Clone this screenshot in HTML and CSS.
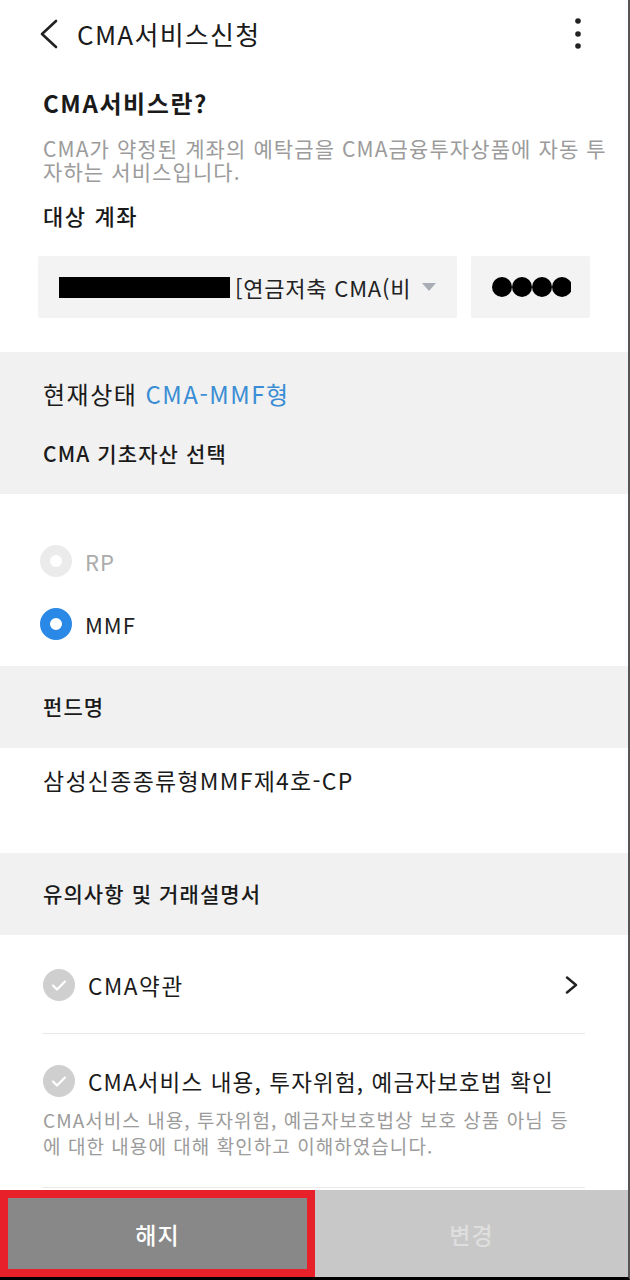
FILE: index.html
```html
<!DOCTYPE html>
<html lang="ko">
<head>
<meta charset="utf-8">
<title>CMA서비스신청</title>
<link rel="stylesheet" href="styles.css">
</head>
<body>
<div class="screen">
  <header class="topbar">
    <svg class="back" width="22" height="30" viewBox="0 0 22 30"><path d="M18 2 L4 15 L18 28" fill="none" stroke="#222" stroke-width="2.6" stroke-linecap="round" stroke-linejoin="round"/></svg>
    <h1 class="title">CMA서비스신청</h1>
    <svg class="kebab" width="10" height="34" viewBox="0 0 10 34"><circle cx="5" cy="4" r="2.8" fill="#222"/><circle cx="5" cy="17" r="2.8" fill="#222"/><circle cx="5" cy="29" r="2.8" fill="#222"/></svg>
  </header>

  <section class="intro">
    <h2 class="intro-title">CMA서비스란?</h2>
    <p class="intro-desc">CMA가 약정된 계좌의 예탁금을 CMA금융투자상품에 자동 투<br>자하는 서비스입니다.</p>
    <h3 class="label">대상 계좌</h3>
    <div class="select-row">
      <div class="select">
        <span class="mask"></span>
        <span class="select-text">[연금저축 CMA(비</span>
        <span class="caret"></span>
      </div>
      <div class="pw">
        <div class="dots"><i></i><i></i><i></i><i></i><i></i></div>
      </div>
    </div>
  </section>

  <section class="band status">
    <p class="status-line">현재상태 <span class="blue">CMA-MMF형</span></p>
    <p class="band-label">CMA 기초자산 선택</p>
  </section>

  <section class="radios">
    <div class="radio-row disabled"><span class="radio"></span><span class="radio-label">RP</span></div>
    <div class="radio-row"><span class="radio on"></span><span class="radio-label">MMF</span></div>
  </section>

  <section class="band short"><p class="band-label">펀드명</p></section>

  <section class="fund"><p class="fund-name">삼성신종종류형MMF제4호-CP</p></section>

  <section class="band short"><p class="band-label">유의사항 및 거래설명서</p></section>

  <section class="terms">
    <div class="term-row">
      <svg class="check" width="32" height="32" viewBox="0 0 32 32"><circle cx="16" cy="16" r="16" fill="#cfcfcf"/><path d="M10 16.5 L14 20.5 L22 12.5" fill="none" stroke="#fff" stroke-width="2.2" stroke-linecap="round" stroke-linejoin="round"/></svg>
      <span class="term-text">CMA약관</span>
      <svg class="chev" width="14" height="18" viewBox="0 0 14 18"><path d="M2 1.5 L11 9 L2 16.5" fill="none" stroke="#222" stroke-width="2.4" stroke-linecap="round" stroke-linejoin="round"/></svg>
    </div>
    <div class="divider"></div>
    <div class="term-row second">
      <svg class="check" width="32" height="32" viewBox="0 0 32 32"><circle cx="16" cy="16" r="16" fill="#cfcfcf"/><path d="M10 16.5 L14 20.5 L22 12.5" fill="none" stroke="#fff" stroke-width="2.2" stroke-linecap="round" stroke-linejoin="round"/></svg>
      <span class="term-text big">CMA서비스 내용, 투자위험, 예금자보호법 확인</span>
    </div>
    <p class="term-desc">CMA서비스 내용, 투자위험, 예금자보호법상 보호 상품 아님 등<br>에 대한 내용에 대해 확인하고 이해하였습니다.</p>
    <div class="divider last"></div>
  </section>

  <footer class="buttons">
    <button class="btn cancel">해지</button>
    <button class="btn change">변경</button>
  </footer>
</div>
</body>
</html>
```
FILE: styles.css
```css
* { box-sizing: border-box; margin: 0; padding: 0; }
html, body { width: 630px; height: 1280px; overflow: hidden; background: #fff; }
body {
  font-family: "Noto Sans CJK KR", "Noto Sans", sans-serif;
  color: #1a1a1a;
}
.screen {
  width: 630px;
  height: 1280px;
  border-right: 2px solid #555;
  border-bottom: 3px solid #000;
  display: flex;
  flex-direction: column;
  overflow: hidden;
}
.topbar {
  height: 70px;
  display: flex;
  align-items: center;
  padding-left: 38px;
  padding-right: 45px;
}
.back { flex: none; margin-top: -2px; }
.title {
  font-size: 26px;
  font-weight: 400;
  line-height: 34px;
  margin-left: 17px;
  margin-top: -2px;
  flex: 1;
  color: #1a1a1a;
  letter-spacing: 1.3px;
}
.kebab { flex: none; margin-top: -2px; }

.intro { padding: 18px 0 34px 43px; }
.intro-title {
  font-size: 24px;
  font-weight: 700;
  line-height: 30px;
  letter-spacing: 1.6px;
}
.intro-desc {
  margin-top: 19px;
  font-size: 21px;
  line-height: 23px;
  color: #9b9b9b;
  white-space: nowrap;
  letter-spacing: 1.1px;
}
.label {
  margin-top: 18px;
  font-size: 22px;
  font-weight: 500;
  line-height: 28px;
  letter-spacing: 1.6px;
}
.select-row {
  margin-top: 27px;
  margin-left: -5px;
  display: flex;
  gap: 14px;
  height: 62px;
}
.select {
  width: 419px;
  background: #f3f3f4;
  border-radius: 2px;
  display: flex;
  align-items: center;
  padding-left: 21px;
}
.mask { width: 171px; height: 21px; background: #000; flex: none; }
.select-text {
  margin-left: 5px;
  font-size: 22px;
  line-height: 28px;
  color: #222;
  letter-spacing: 0.8px;
  white-space: nowrap;
}
.caret {
  margin-left: 11px;
  width: 0; height: 0;
  border-left: 7px solid transparent;
  border-right: 7px solid transparent;
  border-top: 8px solid #a9adb5;
}
.pw {
  width: 119px;
  background: #f3f3f4;
  border-radius: 2px;
  display: flex;
  align-items: center;
  padding-left: 21px;
}
.dots { width: 79px; overflow: hidden; display: flex; }
.dots i { flex: none; width: 20px; height: 20px; border-radius: 50%; background: #000; display: block; }

.band { background: #f1f1f1; padding-left: 43px; }
.status { padding-top: 27px; padding-bottom: 27px; }
.status-line { font-size: 24px; line-height: 30px; letter-spacing: 1.5px; }
.blue { color: #3a8dd4; }
.band-label { font-size: 21px; font-weight: 500; line-height: 28px; letter-spacing: 1.1px; }
.status .band-label { margin-top: 30px; }
.short { padding-top: 26px; padding-bottom: 28px; }

.radios { padding: 47px 0 22px 40px; display: flex; flex-direction: column; gap: 23px; }
.radio-row { display: flex; align-items: center; height: 40px; }
.radio {
  width: 32px; height: 32px; border-radius: 50%;
  border: 10px solid #2a88e6; background: #fff;
}
.disabled .radio { border-color: #ebebeb; }
.radio-label { margin-left: 13px; font-size: 22px; line-height: 28px; color: #222; letter-spacing: 1px; }
.disabled .radio-label { color: #ababab; }

.fund { padding: 17px 0 58px 43px; }
.fund-name { font-size: 23px; line-height: 30px; letter-spacing: 1.25px; }

.terms { padding: 30px 43px 0 42px; flex: 1; }
.term-row { display: flex; align-items: center; height: 40px; }
.term-row .check { margin-left: 1px; flex: none; }
.term-text { margin-left: 13px; font-size: 22.5px; line-height: 28px; flex: 1; letter-spacing: 1.6px; }
.term-text.big { letter-spacing: 1.15px; white-space: nowrap; }
.chev { flex: none; margin-right: 6px; }
.divider { height: 1px; background: #e8e8e8; margin-top: 28px; }
.term-row.second { margin-top: 27px; }
.term-desc {
  margin-top: 6px;
  margin-left: 1px;
  font-size: 19px;
  line-height: 26px;
  color: #9b9b9b;
  letter-spacing: 1.05px;
  white-space: nowrap;
}
.divider.last { margin-top: 28px; }

.buttons { display: flex; height: 87px; flex: none; }
.btn {
  font-family: inherit;
  border: none;
  font-size: 23px;
  font-weight: 500;
  height: 87px;
  letter-spacing: 1px;
}
.cancel {
  width: 315px;
  background: #888;
  color: #fff;
  border: 8px solid #e8202a;
}
.change {
  flex: 1;
  background: #c8c8c8;
  color: #dedede;
}
```
